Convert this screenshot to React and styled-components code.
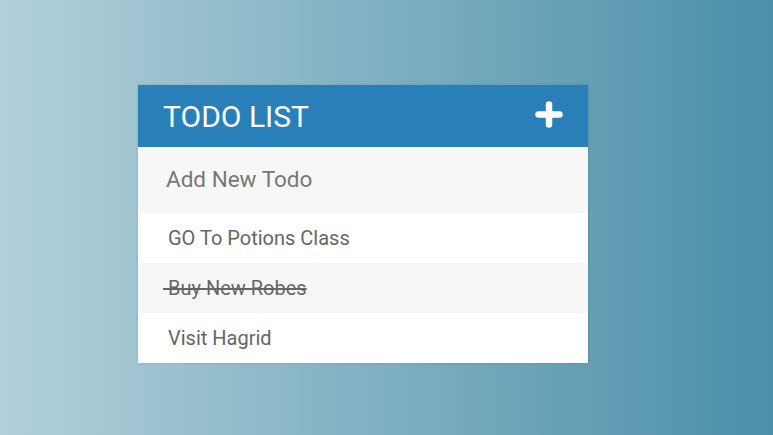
import React from "react";
import styled, { createGlobalStyle } from "styled-components";

const GlobalStyle = createGlobalStyle`
  html, body {
    margin: 0;
    padding: 0;
  }
  body {
    font-family: Roboto, "Liberation Sans", sans-serif;
    background: linear-gradient(90deg, #b2d0da 0%, #4b8fa9 100%);
    min-height: 100vh;
  }
`;

const Page = styled.div`
  min-height: 100vh;
  box-sizing: border-box;
  padding: 85px 0 0 138px;
`;

const Card = styled.div`
  width: 450px;
  background: #fff;
  box-shadow: 0 0 3px rgba(0, 0, 0, 0.12);
`;

const Header = styled.h1`
  margin: 0;
  height: 62px;
  box-sizing: border-box;
  padding: 0 25px 0 25px;
  display: flex;
  align-items: center;
  justify-content: space-between;
  background: #2980b9;
  color: #fff;
  font-size: 30px;
  font-weight: 400;
  text-transform: uppercase;
`;

const AddButton = styled.button`
  border: 0;
  padding: 0;
  margin-bottom: 4px;
  background: none;
  display: flex;
  cursor: pointer;
`;

const NewTodo = styled.input`
  display: block;
  width: 100%;
  height: 66px;
  box-sizing: border-box;
  border: 0;
  outline: none;
  padding: 0 0 2px 28px;
  background: #f7f7f7;
  font-family: Roboto, "Liberation Sans", sans-serif;
  font-size: 22.5px;
  color: #666;

  &::placeholder {
    color: #777;
  }
`;

const List = styled.ul`
  list-style: none;
  margin: 0;
  padding: 0;
`;

const Item = styled.li`
  height: 50px;
  line-height: 50px;
  padding-left: 25px;
  font-size: 20px;
  color: #666;
  background: ${(p) => (p.$odd ? "#f7f7f7" : "#fff")};
  text-decoration: ${(p) => (p.$done ? "line-through" : "none")};
  text-decoration-thickness: 2px;
`;

const DeleteSlot = styled.span`
  display: inline-block;
  width: 0;
  opacity: 0;
`;

const PlusIcon = () => (
  <svg width="28" height="27" viewBox="0 0 28 27">
    <path
      d="M14 3.5 V23.5 M3.5 13.5 H24.5"
      stroke="#fff"
      strokeWidth="6.5"
      strokeLinecap="round"
      fill="none"
    />
  </svg>
);

const todos = [
  { text: "GO To Potions Class", done: false },
  { text: "Buy New Robes", done: true },
  { text: "Visit Hagrid", done: false },
];

export default function App() {
  return (
    <>
      <GlobalStyle />
      <Page>
        <Card>
          <Header>
            Todo List
            <AddButton aria-label="add">
              <PlusIcon />
            </AddButton>
          </Header>
          <NewTodo type="text" placeholder="Add New Todo" />
          <List>
            {todos.map((t, i) => (
              <Item key={t.text} $odd={i % 2 === 1} $done={t.done}>
                <DeleteSlot />
                {" "}
                {t.text}
              </Item>
            ))}
          </List>
        </Card>
      </Page>
    </>
  );
}
